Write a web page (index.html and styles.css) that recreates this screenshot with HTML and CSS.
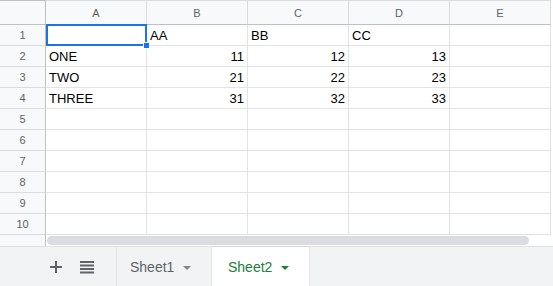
FILE: index.html
```html
<!DOCTYPE html>
<html lang="en">
<head>
    <meta charset="UTF-8">
    <title>Sheet2</title>
    <link rel="stylesheet" href="styles.css">
</head>
<body>
    <div class="sheet">
        <div class="grid">
            <div class="corner"></div>
            <div class="col-head">A</div>
            <div class="col-head">B</div>
            <div class="col-head">C</div>
            <div class="col-head">D</div>
            <div class="col-head">E</div>

            <div class="row-head">1</div>
            <div class="cell selected"><span class="handle"></span></div>
            <div class="cell">AA</div>
            <div class="cell">BB</div>
            <div class="cell">CC</div>
            <div class="cell"></div>

            <div class="row-head">2</div>
            <div class="cell">ONE</div>
            <div class="cell num">11</div>
            <div class="cell num">12</div>
            <div class="cell num">13</div>
            <div class="cell"></div>

            <div class="row-head">3</div>
            <div class="cell">TWO</div>
            <div class="cell num">21</div>
            <div class="cell num">22</div>
            <div class="cell num">23</div>
            <div class="cell"></div>

            <div class="row-head">4</div>
            <div class="cell">THREE</div>
            <div class="cell num">31</div>
            <div class="cell num">32</div>
            <div class="cell num">33</div>
            <div class="cell"></div>

            <div class="row-head">5</div>
            <div class="cell"></div><div class="cell"></div><div class="cell"></div><div class="cell"></div><div class="cell"></div>
            <div class="row-head">6</div>
            <div class="cell"></div><div class="cell"></div><div class="cell"></div><div class="cell"></div><div class="cell"></div>
            <div class="row-head">7</div>
            <div class="cell"></div><div class="cell"></div><div class="cell"></div><div class="cell"></div><div class="cell"></div>
            <div class="row-head">8</div>
            <div class="cell"></div><div class="cell"></div><div class="cell"></div><div class="cell"></div><div class="cell"></div>
            <div class="row-head">9</div>
            <div class="cell"></div><div class="cell"></div><div class="cell"></div><div class="cell"></div><div class="cell"></div>
            <div class="row-head">10</div>
            <div class="cell"></div><div class="cell"></div><div class="cell"></div><div class="cell"></div><div class="cell"></div>
        </div>

        <div class="hscroll">
            <div class="hscroll-gap"></div>
            <div class="hscroll-track"><div class="thumb"></div></div>
        </div>

        <div class="tabbar">
            <div class="tools">
                <svg class="icon" width="14" height="14" viewBox="0 0 14 14">
                    <path d="M7 1v12M1 7h12" stroke="#5f6368" stroke-width="2"/>
                </svg>
                <svg class="icon" width="14" height="14" viewBox="0 0 14 14">
                    <path d="M0 2h14M0 5.5h14M0 9h14M0 12.5h14" stroke="#5f6368" stroke-width="2"/>
                </svg>
            </div>
            <div class="tab">Sheet1 <span class="caret"></span></div>
            <div class="tab active">Sheet2 <span class="caret"></span></div>
        </div>
    </div>
</body>
</html>
```

FILE: styles.css
```css
* {
    box-sizing: border-box;
}
body {
    margin: 0;
    font-family: "Liberation Sans", Arial, sans-serif;
    background: #fff;
}
.sheet {
    width: 553px;
    height: 286px;
    overflow: hidden;
}
.grid {
    display: grid;
    grid-template-columns: 46px repeat(5, 101px);
    grid-template-rows: 25px repeat(10, 21px);
}
.corner {
    background: #f8f9fa;
    border-right: 1px solid #c0c0c0;
    border-bottom: 1px solid #c0c0c0;
    border-top: 1px solid #c0c0c0;
}
.col-head {
    background: #f8f9fa;
    border-right: 1px solid #dadce0;
    border-bottom: 1px solid #c0c0c0;
    border-top: 1px solid #dadce0;
    color: #5f6368;
    font-size: 11px;
    display: flex;
    align-items: center;
    justify-content: center;
    padding-top: 1px;
}
.row-head {
    background: #f8f9fa;
    border-right: 1px solid #c0c0c0;
    border-bottom: 1px solid #dadce0;
    color: #5f6368;
    font-size: 11px;
    display: flex;
    align-items: center;
    justify-content: center;
}
.cell {
    border-right: 1px solid #e2e3e3;
    border-bottom: 1px solid #e2e3e3;
    font-size: 13px;
    color: #000;
    padding: 0 3px;
    display: flex;
    align-items: flex-end;
    padding-bottom: 2px;
    position: relative;
}
.num {
    justify-content: flex-end;
}
.selected::after {
    content: "";
    position: absolute;
    left: 0;
    top: -1px;
    right: -1px;
    bottom: -1px;
    border: 2px solid #1a73e8;
}
.handle {
    position: absolute;
    right: -4px;
    bottom: -4px;
    width: 7px;
    height: 7px;
    background: #1a73e8;
    border: 1px solid #fff;
    z-index: 2;
}
.hscroll {
    display: flex;
    height: 11px;
}
.hscroll-gap {
    width: 46px;
    background: #f8f9fa;
    border-right: 1px solid #c0c0c0;
}
.hscroll-track {
    flex: 1;
    padding: 1px 24px 1px 1px;
}
.thumb {
    height: 9px;
    background: #dadce0;
    border-radius: 5px;
}
.tabbar {
    height: 41px;
    background: #f1f3f4;
    border-top: 1px solid #e0e0e0;
    display: flex;
}
.tools {
    width: 117px;
    display: flex;
    align-items: center;
    padding-left: 49px;
    gap: 17px;
    border-right: 1px solid #e3e4e5;
}
.icon {
    display: block;
}
.tab {
    display: flex;
    align-items: center;
    font-size: 14px;
    color: #5f6368;
    padding: 0 13px 0 13px;
    width: 95px;
    gap: 9px;
}
.tab.active {
    background: #fff;
    color: #188038;
    font-weight: 500;
    width: 97px;
    padding-left: 16px;
    box-shadow: 0 0 2px rgba(0, 0, 0, 0.15);
}
.caret {
    width: 0;
    height: 0;
    border-left: 4px solid transparent;
    border-right: 4px solid transparent;
    border-top: 4px solid #80868b;
    margin-top: 1px;
}
.active .caret {
    border-top-color: #188038;
}
```
